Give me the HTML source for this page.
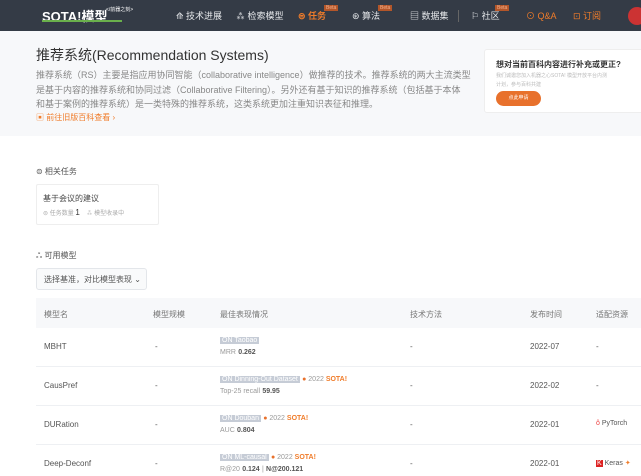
<!DOCTYPE html><html><head><meta charset="utf-8"><style>
*{margin:0;padding:0;box-sizing:border-box}
body{width:641px;height:476px;overflow:hidden;font-family:"Liberation Sans","Noto Sans CJK SC",sans-serif;background:#fff;color:#333;position:relative}
.hd{position:absolute;left:0;top:0;width:641px;height:31px;background:#343b46;color:#e6e8eb;font-size:9px}
.hd span{position:absolute;top:9px;white-space:nowrap}
.beta{position:absolute;font-size:5px;background:#b3562a;color:#f4b08b;padding:0 2px;top:5px;font-style:normal}
.hero{position:absolute;left:0;top:31px;width:641px;height:105px;background:#f7f8fa}
.a{position:absolute;white-space:nowrap}
.th{position:absolute;left:36px;top:298px;width:605px;height:30px;background:#f7f8fa}
.c{position:absolute;font-size:8px;color:#555;white-space:nowrap}
.tag{background:#c6ccd6;color:#fff;font-size:7px;padding:0 2px}
.g{color:#999;font-size:7px}
.line{position:absolute;left:36px;width:605px;height:1px;background:#eef0f3}
</style></head><body>
<div class="hd">
<span style="left:42px;top:6px;font-size:13px;font-weight:bold;color:#fff">SOTA!模型</span>
<span style="left:106px;top:6px;font-size:5px;color:#fff">&lt;/前器之刻&gt;</span>
<div style="position:absolute;left:42px;top:20px;width:80px;height:2px;background:#6ab04c"></div>
<span style="left:176px">⟰ 技术进展</span>
<span style="left:236px">⁂ 检索模型</span>
<span style="left:298px;color:#f07c2a;font-weight:bold">⊜ 任务</span><i class="beta" style="left:324px">Beta</i>
<span style="left:352px">⊛ 算法</span><i class="beta" style="left:378px">Beta</i>
<span style="left:410px">▤ 数据集</span>
<div style="position:absolute;left:458px;top:10px;width:1px;height:12px;background:#666"></div>
<span style="left:471px">⚐ 社区</span><i class="beta" style="left:495px">Beta</i>
<span style="left:526px;color:#f07c2a">⊙ Q&amp;A</span>
<span style="left:573px;color:#f07c2a">⊡ 订阅</span>
<div style="position:absolute;left:628px;top:7px;width:18px;height:18px;border-radius:50%;background:#c33"></div>
</div>
<div class="hero">
<div class="a" style="left:36px;top:14px;font-size:14px;color:#333">推荐系统(Recommendation Systems)</div>
<div class="a" style="left:36px;top:37px;font-size:9px;line-height:14.5px;color:#888">推荐系统（RS）主要是指应用协同智能（collaborative intelligence）做推荐的技术。推荐系统的两大主流类型<br>是基于内容的推荐系统和协同过滤（Collaborative Filtering）。另外还有基于知识的推荐系统（包括基于本体<br>和基于案例的推荐系统）是一类特殊的推荐系统，这类系统更加注重知识表征和推理。</div>
<div class="a" style="left:36px;top:81px;font-size:8px;color:#f07c2a">▣ 前往旧版百科查看 ›</div>
<div style="position:absolute;left:484px;top:18px;width:170px;height:64px;background:#fff;border:1px solid #eee;border-radius:3px">
<div class="a" style="left:11px;top:9px;font-size:8px;font-weight:bold;color:#333">想对当前百科内容进行补充或更正?</div>
<div class="a" style="left:11px;top:22px;font-size:5px;line-height:9px;color:#bbb">我们诚邀您加入机器之心SOTA! 模型开放平台内测<br>计划，参与百科共建</div>
<div style="position:absolute;left:11px;top:41px;width:45px;height:15px;border-radius:8px;background:#e8712c;color:#fff;font-size:5px;text-align:center;line-height:15px">点此申请</div>
</div></div>
<div class="a" style="left:36px;top:166px;font-size:8px;color:#555">⊜ 相关任务</div>
<div style="position:absolute;left:36px;top:184px;width:123px;height:41px;border:1px solid #eee;border-radius:2px">
<div class="a" style="left:6px;top:8px;font-size:8px;color:#444">基于会议的建议</div>
<div class="a" style="left:6px;top:23px;font-size:6px;color:#aaa">⊜ 任务数量 <b style="color:#333;font-weight:normal;font-size:8px">1</b> &nbsp;&nbsp; ⁂ 模型收录中</div></div>
<div class="a" style="left:36px;top:250px;font-size:8px;color:#555">ஃ 可用模型</div>
<div style="position:absolute;left:36px;top:268px;width:111px;height:22px;border:1px solid #e3e6ea;border-radius:3px;background:#f9fafb;font-size:8px;color:#555;padding:5px 7px;white-space:nowrap">选择基准，对比模型表现 ⌄</div>
<div class="th"></div>
<div class="c" style="left:44px;top:309px;color:#777">模型名</div>
<div class="c" style="left:153px;top:309px;color:#777">模型规模</div>
<div class="c" style="left:220px;top:309px;color:#777">最佳表现情况</div>
<div class="c" style="left:410px;top:309px;color:#777">技术方法</div>
<div class="c" style="left:530px;top:309px;color:#777">发布时间</div>
<div class="c" style="left:596px;top:309px;color:#777">适配资源</div>
<div class="line" style="top:366px"></div><div class="line" style="top:405px"></div><div class="line" style="top:444px"></div>
<div class="c" style="left:44px;top:342px">MBHT</div><div class="c" style="left:155px;top:342px">-</div>
<div class="c" style="left:220px;top:335px"><span class="tag">ON Taobao</span></div><div class="c" style="left:220px;top:347px"><span class="g">MRR</span> <b style="font-size:7px">0.262</b></div>
<div class="c" style="left:410px;top:342px">-</div><div class="c" style="left:530px;top:342px">2022-07</div><div class="c" style="left:596px;top:342px">-</div>
<div class="c" style="left:44px;top:381px">CausPref</div><div class="c" style="left:155px;top:381px">-</div>
<div class="c" style="left:220px;top:374px"><span class="tag">ON Dinning-Out Dataset</span> <span style="font-size:7px;color:#999"><span style="color:#e8712c">●</span> 2022 <b style="color:#f07c2a">SOTA!</b></span></div><div class="c" style="left:220px;top:386px"><span class="g">Top-25 recall</span> <b style="font-size:7px">59.95</b></div>
<div class="c" style="left:410px;top:381px">-</div><div class="c" style="left:530px;top:381px">2022-02</div><div class="c" style="left:596px;top:381px">-</div>
<div class="c" style="left:44px;top:420px">DURation</div><div class="c" style="left:155px;top:420px">-</div>
<div class="c" style="left:220px;top:413px"><span class="tag">ON Douban</span> <span style="font-size:7px;color:#999"><span style="color:#e8712c">●</span> 2022 <b style="color:#f07c2a">SOTA!</b></span></div><div class="c" style="left:220px;top:425px"><span class="g">AUC</span> <b style="font-size:7px">0.804</b></div>
<div class="c" style="left:410px;top:420px">-</div><div class="c" style="left:530px;top:420px">2022-01</div><div class="c" style="left:596px;top:420px;font-size:7px"><span style="color:#e44">ô</span> PyTorch</div>
<div class="c" style="left:44px;top:459px">Deep-Deconf</div><div class="c" style="left:155px;top:459px">-</div>
<div class="c" style="left:220px;top:452px"><span class="tag">ON ML-causal</span> <span style="font-size:7px;color:#999"><span style="color:#e8712c">●</span> 2022 <b style="color:#f07c2a">SOTA!</b></span></div><div class="c" style="left:220px;top:464px"><span class="g">R@20</span> <b style="font-size:7px">0.124</b> <span class="g">|</span> <b style="font-size:7px">N@200.121</b></div>
<div class="c" style="left:410px;top:459px">-</div><div class="c" style="left:530px;top:459px">2022-01</div><div class="c" style="left:596px;top:459px;font-size:7px"><span style="background:#d22;color:#fff;padding:0 1px">K</span> Keras <span style="color:#f07c2a">✦</span></div>
</body></html>
